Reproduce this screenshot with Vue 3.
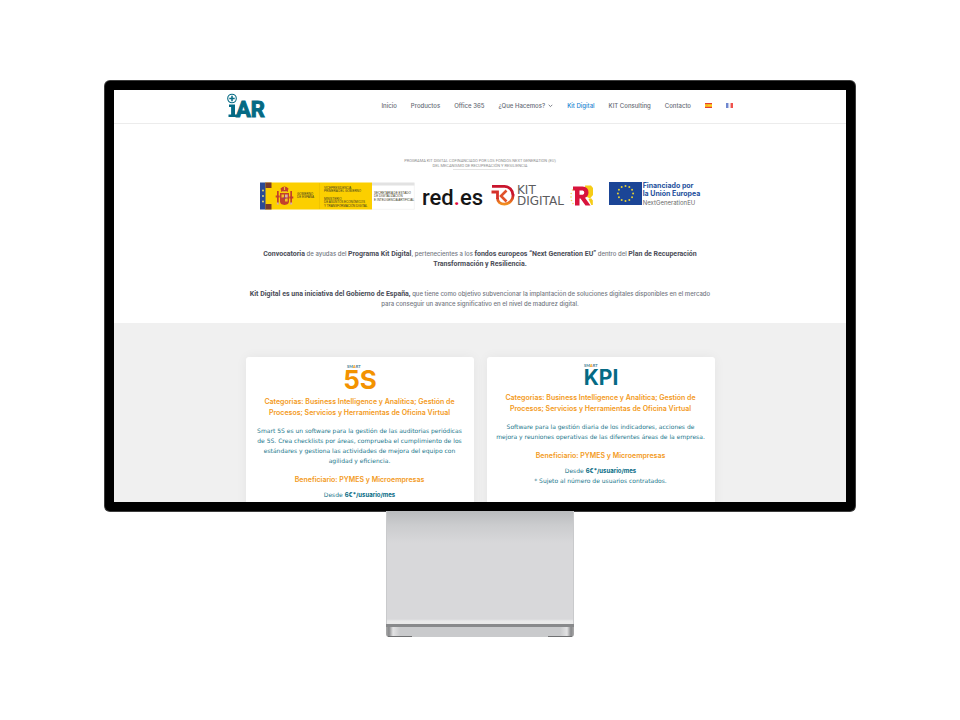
<script setup>
const nav = [
  { label: 'Inicio' },
  { label: 'Productos' },
  { label: 'Office 365' },
  { label: '¿Que Hacemos?', sub: true },
  { label: 'Kit Digital', active: true },
  { label: 'KIT Consulting' },
  { label: 'Contacto' },
]

const cards = [
  {
    logo: '5S',
    categories: ['Categorias: Business Intelligence y Analítica; Gestión de', 'Procesos; Servicios y Herramientas de Oficina Virtual'],
    text: [
      'Smart 5S es un software para la gestión de las auditorias periódicas',
      'de 5S. Crea checklists por áreas, comprueba el cumplimiento de los',
      'estándares y gestiona las actividades de mejora del equipo con',
      'agilidad y eficiencia.',
    ],
  },
  {
    logo: 'KPI',
    categories: ['Categorias: Business Intelligence y Analítica; Gestión de', 'Procesos; Servicios y Herramientas de Oficina Virtual'],
    text: [
      'Software para la gestión diaria de los indicadores, acciones de',
      'mejora y reuniones operativas de las diferentes áreas de la empresa.',
    ],
    note: '* Sujeto al número de usuarios contratados.',
  },
]

const ring = (n, cx, cy, r) =>
  Array.from({ length: n }, (_, i) => {
    const a = (i / n) * Math.PI * 2
    return { x: cx + r * Math.sin(a), y: cy - r * Math.cos(a) }
  })
const euStars = ring(12, 16.5, 11.5, 7.6)
</script>

<template>
  <main class="stage">
    <div class="monitor">
      <div class="screen">
        <header class="top">
          <div class="wrap bar">
            <a class="brand" href="#" aria-label="iAR">
              <svg width="42" height="30" viewBox="0 0 42 30">
                <circle cx="5" cy="6.500" r="4.300" fill="none" stroke="#056a84" stroke-width="1.100" />
                <path d="M5 3.800v5.400M2.300 6.500h5.400" stroke="#056a84" stroke-width="1.500" />
                <path d="M2 12.500h6v10h2.300v2.500H1.500v-2.500h2.600v-7.400H2z" fill="#056a84" />
                <text x="9" y="25" class="ar">AR</text>
              </svg>
            </a>
            <nav class="menu">
              <a v-for="n in nav" :key="n.label" href="#" :class="{ active: n.active }">
                {{ n.label }}
                <svg v-if="n.sub" width="5" height="4" viewBox="0 0 5 4">
                  <path d="M.7.8 2.500 2.600 4.300.8" fill="none" stroke="#5c616b" stroke-width=".8" />
                </svg>
              </a>
              <a href="#" aria-label="Español">
                <svg width="7" height="5" viewBox="0 0 7 5">
                  <path fill="#e5402f" d="M0 0h7v5H0z" /><path fill="#ffd21e" d="M0 1.200h7v2.600H0z" /><path fill="#f0a52a" d="M1.300 1.800h1.300v1.300H1.300z" />
                </svg>
              </a>
              <a href="#" aria-label="Français">
                <svg width="7" height="5" viewBox="0 0 7 5">
                  <path fill="#f3f3f8" d="M0 0h7v5H0z" /><path fill="#6f87cf" d="M0 0h2.400v5H0z" /><path fill="#f0524c" d="M4.600 0H7v5H4.600z" />
                </svg>
              </a>
            </nav>
          </div>
        </header>

        <section class="intro">
          <p class="program">PROGRAMA KIT DIGITAL COFINANCIADO POR LOS FONDOS NEXT GENERATION (EU)<br />DEL MECANISMO DE RECUPERACIÓN Y RESILIENCIA</p>
          <hr class="rule" />
          <div class="logos">
            <svg width="158" height="28" viewBox="0 0 158 28">
              <path fill="#2b4a95" d="M0 .5h6v27H0z" />
              <path fill="#fccf00" d="M5.500.5H112v27H5.500z" />
              <path fill="#7a3b2a" d="M5.500.5h6V6h-6zM5.500 22h6v5.500h-6z" />
              <g fill="#f3e36b"><circle cx="3" cy="8.500" r=".9" /><circle cx="3" cy="14" r=".9" /><circle cx="3" cy="19.500" r=".9" /></g>
              <path fill="#e2e2e2" d="M112 .5h42.500v3H112z" />
              <path fill="none" stroke="#ececec" stroke-width=".6" d="M112 27.300h42.300V1" />
              <g fill="#c2402c">
                <path d="M20 11h9v8.500q0 3-4.500 3.500-4.500-.5-4.500-3.500z" />
                <path d="M20.500 6.500q4-4 8 0l-1 3.500h-6z" />
                <path d="M17 9h1.700v13H17zM30.300 9H32v13h-1.700zM15.700 13.500h4v2h-4zM29.300 14.500h4v2h-4z" />
              </g>
              <path fill="#f1c02a" d="M21.500 12.500h2.500v3h-2.500zM25 16.500h2.700v3H25zM23.900 5h1.200v3h-1.200zM22 9.300h5v.9h-5z" />
              <path fill="#d7b2aa" d="M25 12.500h2.700v3H25zM16.800 20.500h2v2h-2zM30.200 20.500h2v2h-2z" />
              <path fill="#8b3a7a" d="M23.600 15.200h1.800v1.800h-1.800z" />
              <path stroke="#e0b300" stroke-width=".4" d="M59.500 1v26" />
              <g class="gov">
                <text x="37" y="13">GOBIERNO</text><text x="37" y="16">DE ESPAÑA</text>
                <text x="64" y="7">VICEPRESIDENCIA</text><text x="64" y="10">PRIMERA DEL GOBIERNO</text>
                <text x="64" y="18">MINISTERIO</text><text x="64" y="21">DE ASUNTOS ECONÓMICOS</text><text x="64" y="25">Y TRANSFORMACIÓN DIGITAL</text>
                <text x="114" y="12">SECRETARÍA DE ESTADO</text><text x="114" y="15">DE DIGITALIZACIÓN</text><text x="114" y="19">E INTELIGENCIA ARTIFICIAL</text>
              </g>
            </svg>
            <svg class="red" width="66" height="28" viewBox="0 0 66 28">
              <text x="0" y="23" class="redes">red<tspan fill="#e4093c">.</tspan>es</text>
            </svg>
            <svg class="kit" width="76" height="28" viewBox="0 0 76 28">
              <defs>
                <linearGradient id="kd" x1="0" y1="0" x2="0" y2="1"><stop offset="0" stop-color="#c9152d" /><stop offset="1" stop-color="#f2901f" /></linearGradient>
              </defs>
              <g fill="none" stroke-width="2.800">
                <path stroke="#c9152d" d="M1 4.400h12.500a8.800 8.800 0 0 1 8.500 8.800" />
                <path stroke="url(#kd)" d="M22 12.500a8.700 8.700 0 0 1-8.500 9.600c-4.500 0-7-2.500-7-6.100" />
                <path stroke="#d5302a" d="M.5 10h6v7" />
                <path stroke="#e0522a" stroke-width="2.600" d="m15.500 8.500-5.500 5.500 5.500 5.500" />
              </g>
              <g class="kittext"><text x="26" y="12">KIT</text><text x="26" y="23">DIGITAL</text></g>
            </svg>
            <svg class="plan" width="24" height="28" viewBox="0 0 24 28">
              <path fill="#f6cc16" d="M15 3.500h6l2 2.500v7l-3 3.500-4-2z" />
              <path fill="#d8143c" fill-rule="evenodd" d="M3 4.500h9.500q6 .3 6 6 0 4-3.500 5.200l5.500 7.800h-5L10.500 16.500H9.500v7H5V8.500H3zM9.500 8.500v4.200h3.200q1.600-.3 1.600-2.100t-1.600-2.100z" />
              <path fill="#f6cc16" d="m18.500 17 2.700-.8 1.600 2.300v4.500h-1.500z" />
              <g fill="#f3d35a"><circle cx="2.500" cy="8" r=".8" /><circle cx="1.200" cy="11.500" r=".8" /><circle cx="1" cy="15" r=".8" /><circle cx="1.500" cy="18.500" r=".8" /><circle cx="3" cy="21.500" r=".8" /></g>
            </svg>
            <div class="eu">
              <svg width="33" height="23" viewBox="0 0 33 23">
                <path fill="#1b4596" d="M0 0h33v23H0z" />
                <circle v-for="(s, i) in euStars" :key="i" :cx="s.x" :cy="s.y" r="1" fill="#e3cf35" />
              </svg>
              <p><b>Financiado por</b><b>la Unión Europea</b><span>NextGenerationEU</span></p>
            </div>
          </div>
          <p class="copy"><b>Convocatoria</b> de ayudas del <b>Programa Kit Digital</b>, pertenecientes a los <b>fondos europeos “Next Generation EU”</b> dentro del <b>Plan de Recuperación<br />Transformación y Resiliencia.</b></p>
          <p class="copy"><b>Kit Digital es una iniciativa del Gobierno de España,</b> que tiene como objetivo subvencionar la implantación de soluciones digitales disponibles en el mercado<br />para conseguir un avance significativo en el nivel de madurez digital.</p>
        </section>

        <section class="products">
          <article v-for="c in cards" :key="c.logo" class="card">
            <svg v-if="c.logo === '5S'" width="40" height="39" viewBox="0 0 40 39">
              <text x="7" y="11" class="smart">SM<tspan fill="#f39200">A</tspan>RT</text>
              <text x="20" y="32" class="big five">5S</text>
            </svg>
            <svg v-else width="44" height="35" viewBox="0 0 44 35">
              <text x="5" y="10" class="smart">SM<tspan fill="#f39200">A</tspan>RT</text>
              <text x="22" y="28" class="big kpi">KPI</text>
            </svg>
            <h2><template v-for="l in c.categories" :key="l">{{ l }}<br /></template></h2>
            <p class="desc"><template v-for="l in c.text" :key="l">{{ l }}<br /></template></p>
            <h3>Beneficiario: PYMES y Microempresas</h3>
            <p class="price">Desde <b>6€*/usuario/mes</b></p>
            <p v-if="c.note" class="note">{{ c.note }}</p>
          </article>
        </section>
      </div>
    </div>
    <div class="stand">
      <div class="neck"></div>
      <div class="foot"></div>
    </div>
  </main>
</template>

<style>
body { background: #fff; }
</style>

<style scoped>
* { box-sizing: border-box; }
p, h2, h3 { margin: 0; }
svg { display: block; flex: none; }
a { color: inherit; text-decoration: none; }

.stage {
  display: flex;
  flex-direction: column;
  align-items: center;
  padding: 81px 0 40px;
  font-family: Inter, sans-serif;
}
.monitor {
  display: grid;
  width: 78.125%;
  aspect-ratio: 750 / 430;
  min-height: 0;
  padding: 9px;
  overflow: hidden;
  background: #000;
  border-radius: 5px;
  box-shadow: 0 0 0 1px #3c3c3c;
}
.screen { min-height: 0; overflow: hidden; background: #fff; }

.top { border-bottom: 1px solid #ececec; }
.wrap { width: 506px; max-width: 100%; margin: 0 auto; }
.bar { display: flex; align-items: center; justify-content: space-between; height: 33px; }
.ar { font: 700 22px Roboto, sans-serif; fill: #056a84; stroke: #056a84; stroke-width: 1; }
.menu { display: flex; align-items: center; gap: 14px; padding-bottom: 2px; font-size: 6px; font-weight: 500; line-height: 10px; color: #666b75; white-space: nowrap; }
.menu a { display: flex; align-items: center; gap: 3px; }
.menu .active { color: #1c86d1; }

.intro { display: flex; flex-direction: column; align-items: center; padding: 34px 0 14px; text-align: center; }
.program { font: 4px/5px Roboto, sans-serif; color: #8d8d8d; white-space: nowrap; }
.rule { width: 55px; height: 1px; margin: 1px 0 0; border: 0; background: #e3e3e3; }
.logos { display: flex; align-items: flex-start; margin-top: 12px; }
.gov { font: 400 3px "Liberation Sans", sans-serif; fill: #3b3620; }
.red { margin-left: 4px; }
.redes { font: 500 22px Roboto, sans-serif; fill: #161616; }
.kit { margin-left: 3px; }
.kittext { font: 400 12px "DejaVu Sans", sans-serif; fill: #5c5c5e; }
.plan { margin-left: 3px; }
.eu { display: flex; gap: 1px; margin-left: 15px; text-align: left; }
.eu p { display: flex; flex-direction: column; font-size: 7px; line-height: 8px; color: #24509c; white-space: nowrap; }
.eu span { font-size: 6px; line-height: 10px; color: #6a6a6a; }
.copy { margin-top: 20px; font-size: 6px; font-weight: 500; line-height: 10px; color: #73777f; white-space: nowrap; }
.logos + .copy { margin-top: 39px; }
.copy b { font: 700 7px/10px Roboto, sans-serif; color: #4a4c57; }

.products { display: flex; justify-content: center; align-items: stretch; gap: 13px; padding: 34px 0; background: #f0f0f0; }
.card {
  display: flex;
  flex-direction: column;
  align-items: center;
  width: 228px;
  padding-bottom: 26px;
  text-align: center;
  white-space: nowrap;
  color: #23788c;
  background: #fff;
  border-radius: 3px;
  box-shadow: 0 0 12px rgba(0, 0, 0, .05);
}
.smart { font: 700 4px Lato, sans-serif; fill: #3c8093; }
.big { text-anchor: middle; }
.five { font: 700 26px Inter, sans-serif; fill: #f39200; }
.kpi { font: 700 21px Inter, sans-serif; fill: #056a84; }
h2, h3 { font-size: 7px; font-weight: 600; line-height: 11px; color: #f39a1b; }
.desc, .price, .note { font: 400 6px/10px "DejaVu Sans", sans-serif; }
.desc { margin: 8px 0; }
.price { margin-top: 5px; }
.price b { font: 700 6px/10px Inter, sans-serif; color: #056a84; }

.stand { width: 188px; }
.neck {
  height: 113px;
  background: linear-gradient(#b9bbbd 0, #cbccce 14px, #d8d8da 32px, #d8d8da 108px, #e9e9e9 110px, #e9e9e9 113px);
  border: solid #c9cacc;
  border-width: 0 1px;
}
.foot {
  height: 13px;
  border-top: 3px solid #88898b;
  border-radius: 0 0 3px 3px;
  background:
    linear-gradient(#707173, #707173) 2px 100% / 24px 1px no-repeat,
    linear-gradient(#707173, #707173) calc(100% - 2px) 100% / 24px 1px no-repeat,
    linear-gradient(90deg, #aaa 0, #88898b 3px, #e3e3e4 7px, #c9cacc 14px, #c9cacc calc(100% - 14px), #e3e3e4 calc(100% - 7px), #88898b calc(100% - 3px), #aaa 100%);
}
</style>
